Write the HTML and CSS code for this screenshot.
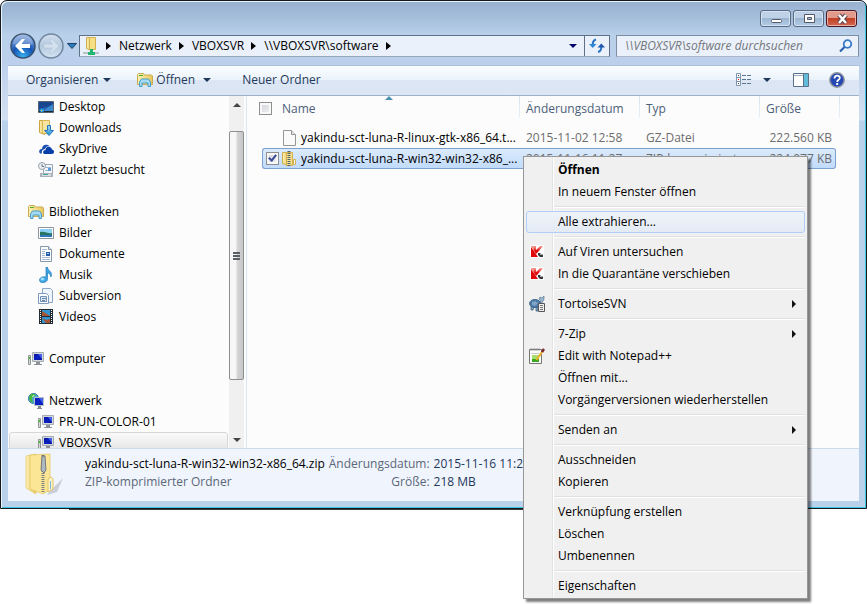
FILE: index.html
```html
<!DOCTYPE html>
<html lang="de">
<head>
<meta charset="utf-8">
<title>software</title>
<link rel="stylesheet" href="styles.css">
</head>
<body>
<svg class="defs" aria-hidden="true">
  <defs>
    <linearGradient id="gold" x1="0" x2="1"><stop offset="0" stop-color="#fdf0b4"/><stop offset="1" stop-color="#e9c65c"/></linearGradient>
    <linearGradient id="blue" x1="0" y1="0" x2="0" y2="1"><stop offset="0" stop-color="#9fd8f5"/><stop offset="1" stop-color="#2a8fd0"/></linearGradient>
    <linearGradient id="screen" x1="0" y1="0" x2="1" y2="1"><stop offset="0" stop-color="#0a1490"/><stop offset=".5" stop-color="#0a20c8"/><stop offset="1" stop-color="#0a1490"/></linearGradient>
    <radialGradient id="orb" cx=".5" cy=".95" r=".9"><stop offset="0" stop-color="#37b4f2"/><stop offset=".5" stop-color="#1553b4"/><stop offset="1" stop-color="#7fa3dc"/></radialGradient>
    <linearGradient id="pale" x1="0" y1="0" x2="0" y2="1"><stop offset="0" stop-color="#d3e0ee"/><stop offset=".5" stop-color="#b5c9df"/><stop offset="1" stop-color="#d5e4f3"/></linearGradient>
    <linearGradient id="red" x1="0" y1="0" x2="0" y2="1"><stop offset="0" stop-color="#f6a79d"/><stop offset=".6" stop-color="#e00b0b"/><stop offset="1" stop-color="#d80000"/></linearGradient>
    <symbol id="pc" viewBox="0 0 16 16"><path d="M.5 4.500h2v9h-2z" fill="#d6dad6" stroke="#8e9691"/><path d="M1 6h1v2H1z" fill="#34c41c"/><path d="M4.500 1.500h11v9h-11z" fill="#d3d8dc" stroke="#a4abb2"/><path d="M6 3h8v6H6z" fill="url(#screen)"/><path d="M10 3h4v5z" fill="#5d7bff" opacity=".7"/><path d="M8 11h4v2H8zM6 13h8v1H6z" fill="#8c9298"/></symbol>
    <symbol id="library" viewBox="0 0 16 16"><path d="M.5 2.500l1-1h5l1 1.500h7l1 1v8.500H.5z" fill="url(#gold)" stroke="#c9ab52"/><path d="M2 3h4v1H2z" fill="#4fae35"/><path d="M2.500 14.500V10l2-3h7l2 3v4.500H11V11H5v3.500z" fill="#a6dbf4" stroke="#459fca"/></symbol>
    <symbol id="desktop" viewBox="0 0 16 16"><path d="M.5 2.500h15v11H.5z" fill="#2562b4" stroke="#5a6470"/><path d="M1 3h14v3L1 10z" fill="#17458f"/><path d="M5 12l10-7v7z" fill="#4ba1dc" opacity=".6"/><path d="M1 12h14v1H1z" fill="#1a2a3c"/><circle cx="4" cy="11.500" r="2" fill="#2f9de0"/><path d="M3 11h1v1H3z" fill="#fc3"/></symbol>
    <symbol id="download" viewBox="0 0 16 16"><path d="M1.500.5h5v14l-5-2z" fill="url(#gold)" stroke="#cba53c"/><path d="M4.500.5h7v13h-7z" fill="#f8e5a0" stroke="#d7b654"/><path d="M9.500 5.500h3v5h3l-4.500 5-4.500-5h3z" fill="url(#blue)" stroke="#2475bd"/></symbol>
    <symbol id="cloud" viewBox="0 0 16 16"><path d="M2 12.500C0 9.500 2 8 4 8c0-5 5.500-5.500 8-2.500-2.500-1-4.500.500-5 2.500-3 .5-3.500 2.500-3 4.500z" fill="#1a4fae"/><path d="M6.500 13C4.500 12.500 4.500 9.500 7.500 9c0-4 5.500-4.500 6.500-.5 3 .5 2.500 4.500 0 4.500z" fill="#063fa8"/></symbol>
    <symbol id="recent" viewBox="0 0 16 16"><path d="M5.500 2.500h9v9h-9z" fill="#f5f7fa" stroke="#9ba6b2"/><path d="M7 5h6v1H7zM7 8h3v1H7z" fill="#9bb7d5"/><path d="M10 6h3v3h-3z" fill="#5c9bd6"/><path d="M2 11h13v4H2z" fill="#aab1b8"/><path d="M4 12h9v2H4z" fill="#d6dce0"/><path d="M5 12h5v1H5z" fill="#4aa4a0"/><circle cx="4" cy="4" r="3.500" fill="#eef2f6" stroke="#97a0a9"/><path d="M4 2v2.500h2" fill="none" stroke="#687785"/></symbol>
    <symbol id="picture" viewBox="0 0 16 16"><path d="M.5 2.500h15v11H.5z" fill="#fff" stroke="#8e959c"/><path d="M2 4h12v8H2z" fill="#8fd0f5"/><path d="M2 7c5-1 8 2 12 1v4H2z" fill="#28755f"/><path d="M2 10h12v2H2z" fill="#3076bb"/></symbol>
    <symbol id="document" viewBox="0 0 16 16"><path d="M2.500.5h8l3 3v12h-11z" fill="#fff" stroke="#8798aa"/><path d="M10.500.5v3h3" fill="#dbe5ef" stroke="#8798aa"/><path d="M4 3.500h5M4 5.500h3M4 7.500h3M4 9.500h3M4 11.500h8M4 13.500h8" stroke="#a3bad2"/><path d="M8 6h4v4H8z" fill="#215ea7"/><path d="M9 7h2v1H9z" fill="#a6d6f5"/></symbol>
    <symbol id="music" viewBox="0 0 16 16"><path d="M8 0h1.500c0 4 5.500 4 3.500 10-.5-3-2-4-3.500-4v6c0 4-7.500 5-8 1.500C1.500 10 5 9.500 8 10z" fill="#3da4e4" stroke="#227dbe" stroke-width=".7"/><ellipse cx="4.500" cy="12" rx="2" ry="1.500" fill="#9fdcff"/></symbol>
    <symbol id="subversion" viewBox="0 0 16 16"><path d="M4.500.5h8l2 2v12h-10z" fill="#eff5fb" stroke="#8ba7c5"/><path d="M.5 5.500h8l2 2v8H.5z" fill="#fafcff" stroke="#7d99bb"/><path d="M2.500 8.500h6v5h-6z" fill="#dce8f4" stroke="#7390b5"/><path d="M4 10.500h4M4 12.500h3" stroke="#6a87ad"/></symbol>
    <symbol id="video" viewBox="0 0 16 16"><path d="M1 0h14v15H1z" fill="#222d35"/><path d="M4 1h8v6H4zM4 8h8v6H4z" fill="#3195d2"/><path d="M4 2l5 3 3 2H4zM4 9l4 2 4-1v4H8z" fill="#a65632"/><path d="M2.500 1v14M13.500 1v14" stroke="#fff" stroke-dasharray="1 1"/></symbol>
    <symbol id="network" viewBox="0 0 16 16"><circle cx="5.500" cy="5.500" r="5" fill="#4ba7e0" stroke="#287ba9"/><path d="M1 4c2-5 6-3 7-2L6 4 4 5l1 5C2 9 1 7 1 4z" fill="#49b63e"/><path d="M4 3l3-1-2 2z" fill="#fff"/><path d="M6.500 4.500h9v8h-9z" fill="#0a20c0" stroke="#b5bfc8"/><path d="M11 5h4v6z" fill="#5d7bff" opacity=".7"/><path d="M10 13h3v2h-3zM9 15h5v1H9z" fill="#858b91"/></symbol>
    <symbol id="zip" viewBox="0 0 16 16"><path d="M1.500 1.500h6v13l-6-2z" fill="url(#gold)" stroke="#cfae49"/><path d="M5.500 1.500h6v13h-6z" fill="#f8e28b" stroke="#d4b04c"/><path d="M8 0v16" stroke="#53636e" stroke-width="3" stroke-dasharray="1 1"/><path d="M12.500 8.500h2v5h-2z" fill="#fff" stroke="#d4b04c"/></symbol>
    <symbol id="file" viewBox="0 0 16 16"><path d="M2.500.5h8l4 4v11h-12z" fill="#fafafa" stroke="#969696"/><path d="M10.500.5v4h4" fill="#e4e4e4" stroke="#969696"/></symbol>
    <symbol id="kaspersky" viewBox="0 0 16 16"><path d="M1 1h14v13H1z" fill="#fff"/><path d="M2 2h5v4l4-4h3L9 8l-2 2z" fill="url(#red)"/><path d="M2 3l7 10H2z" fill="#e10808"/><path d="M2 2h3v4z" fill="#f3968c"/><path d="M9 9h2l1 1h2v3h-3l-2-2z" fill="#33373a"/><path d="M11 10h3v1h-3z" fill="#aaa"/></symbol>
    <symbol id="tortoise" viewBox="0 0 16 16"><path d="M10 8c1-1 1-3 1-4l-1-1 1-2 2 1 2-2v3l-1 2-2 4z" fill="#9ab6cd" stroke="#4a6d90" stroke-width=".6"/><path d="M2 10v4h2l1-3M7 11v4h2v-4" fill="#82aac9" stroke="#305779" stroke-width=".7"/><ellipse cx="6" cy="7.500" rx="5.500" ry="4" fill="#4b7aa6" stroke="#2f5580" stroke-width=".8"/><path d="M3 6l3-1 3 2-3 3-3-1z" fill="#7ea3c6"/><path d="M9.500 7.500h6v8h-6z" fill="#eee" stroke="#555"/><path d="M11 9.500h3M11 11.500h3M11 13.500h3" stroke="#777"/></symbol>
    <symbol id="notepad" viewBox="0 0 16 16"><path d="M.5 1.500h12v14H.5z" fill="#fbfdf8" stroke="#777"/><path d="M3 7h7v7H3z" fill="#a9dd70"/><path d="M3 11h7v3H3z" fill="#3aa523"/><path d="M2 5.500h8" stroke="#ccc"/><path d="M2 0v3M4 0v3M6 0v3M8 0v3M10 0v3" stroke="#888" stroke-width=".7"/><path d="M7.500 12L13 4" stroke="#edae25" stroke-width="2"/><path d="M13 4l2-3" stroke="#782424" stroke-width="2.500"/></symbol>
  </defs>
</svg>

<main class="window">
  <header class="titlebar">
    <button class="caption" aria-label="Minimieren"><svg width="28" height="16" viewBox="0 0 28 16"><rect x="9.500" y="8.500" width="10" height="3" rx="1" fill="#fff" stroke="#555966"/></svg></button>
    <button class="caption" aria-label="Maximieren"><svg width="28" height="16" viewBox="0 0 28 16"><path d="M9.500 3.500h10v8h-10z" fill="#fff" stroke="#555966"/><path d="M12.500 6.500h4v2h-4z" fill="#a7c2dc" stroke="#555966"/></svg></button>
    <button class="caption close" aria-label="Schließen"><svg width="28" height="16" viewBox="0 0 28 16"><path d="M11 4l7 8M18 4l-7 8" stroke="#5a4450" stroke-width="4.500"/><path d="M11 4l7 8M18 4l-7 8" stroke="#fff" stroke-width="2.500"/></svg></button>
  </header>

  <div class="navrow">
    <div class="travel">
      <button class="plain" aria-label="Zurück"><svg width="26" height="26" viewBox="0 0 26 26"><circle cx="13" cy="13" r="12" fill="url(#orb)" stroke="#38506f" stroke-width="1.500"/><path d="M3 11a10 10 0 0 1 20 0q-10 4-20 0z" fill="#fff" opacity=".25"/><path d="M5 13l7-7h3l-3.500 5H20v4h-8.500L15 20h-3z" fill="#fff"/></svg></button>
      <button class="plain" aria-label="Vorwärts"><svg width="26" height="26" viewBox="0 0 26 26"><circle cx="13" cy="13" r="12" fill="url(#pale)" stroke="#71869e" stroke-width="1.500"/><path d="M21 13l-7-7h-3l3.500 5H6v4h8.500L11 20h3z" fill="#d3e0ed" stroke="#b4c6d8" stroke-width=".6"/></svg></button>
      <button class="plain history" aria-label="Verlauf"><svg width="10" height="6" viewBox="0 0 10 6"><path d="M.5.5h9L5 5.500z" fill="#2d7db8" stroke="#173f70"/></svg></button>
    </div>
    <nav class="address" aria-label="Adresse">
      <svg class="place" width="16" height="18" viewBox="0 0 16 18"><path d="M3.500.5h5v13l-5-2z" fill="url(#gold)" stroke="#cfae49"/><path d="M6.500.5h6v12h-6z" fill="#f7df85" stroke="#d4b04c"/><path d="M0 15h16v2H0z" fill="#b8c4c8"/><path d="M7 12h3v3h2v3H5v-3h2z" fill="#21b571"/></svg>
      <i class="crumb-arrow"></i><a href="#">Netzwerk</a>
      <i class="crumb-arrow"></i><a href="#">VBOXSVR</a>
      <i class="crumb-arrow"></i><a href="#">\\VBOXSVR\software</a>
      <i class="crumb-arrow"></i>
      <button class="plain recent" aria-label="Vorherige Orte"><i class="down"></i></button>
      <button class="plain refresh" aria-label="Aktualisieren"><svg width="16" height="16" viewBox="0 0 16 16"><path d="M7 1.500C4.500 2 3.700 4 3.700 7M9 14c2.500-.5 3.300-2 3.300-5" fill="none" stroke="#2c72c4" stroke-width="2"/><path d="M0 6h7.500L3.700 10z" fill="#2c88d6"/><path d="M8.500 9.500h7.500L12.300 5.500z" fill="#1d57ac"/></svg></button>
    </nav>
    <form class="search">
      <input type="search" aria-label="Suchen" placeholder="\\VBOXSVR\software durchsuchen">
      <button class="plain" type="button" aria-label="Suche starten"><svg width="14" height="14" viewBox="0 0 14 14"><circle cx="8.500" cy="5" r="3.800" fill="#eaf5ff" stroke="#3a78c6" stroke-width="1.800"/><path d="M5.500 8L1 12.500" stroke="#2860ab" stroke-width="2.200"/></svg></button>
    </form>
  </div>

  <div class="toolbar">
    <button class="tool organise">Organisieren <i class="down"></i></button>
    <button class="tool open"><svg width="16" height="16"><use href="#library"/></svg>Öffnen <i class="down"></i></button>
    <button class="tool">Neuer Ordner</button>
    <span class="tools-end">
      <button class="tool" aria-label="Ansicht ändern"><svg width="16" height="14" viewBox="0 0 16 14"><path d="M.5.5h4v4h-4zM.5 4.500h4v4h-4zM.5 8.500h4v4h-4z" fill="#fff" stroke="#7e93ad"/><path d="M2 2h1v1H2zM2 10h1v1H2z" fill="#444"/><path d="M2 6h1v1H2z" fill="red"/><path d="M6 2.500h4M11 2.500h4M6 6.500h4M11 6.500h4M6 10.500h4M11 10.500h4" stroke="#5b7492"/></svg><i class="down"></i></button>
      <button class="tool" aria-label="Vorschaufenster"><svg width="16" height="14" viewBox="0 0 16 14"><path d="M.5.5h15v13H.5z" fill="#fff" stroke="#56718c"/><path d="M1 2.500h9" stroke="#9cb0c4"/><path d="M10.500 1v12" stroke="#56718c"/><path d="M11 1h4v12h-4z" fill="#62bbd9"/></svg></button>
      <button class="tool" aria-label="Hilfe"><svg width="16" height="16" viewBox="0 0 16 16"><circle cx="8" cy="8" r="7.200" fill="#2348b4" stroke="#8f959e" stroke-width="1.500"/><path d="M5.500 6.500c0-4 5.500-3.500 5.300-.5C10.700 8 8.200 7.500 8.200 10" fill="none" stroke="#fff" stroke-width="1.800"/><path d="M7.200 11h2v2h-2z" fill="#fff"/></svg></button>
    </span>
  </div>

  <div class="body">
    <nav class="sidebar" aria-label="Navigation">
      <ul class="tree">
        <li class="child"><svg><use href="#desktop"/></svg><a href="#">Desktop</a></li>
        <li class="child"><svg><use href="#download"/></svg><a href="#">Downloads</a></li>
        <li class="child"><svg><use href="#cloud"/></svg><a href="#">SkyDrive</a></li>
        <li class="child"><svg><use href="#recent"/></svg><a href="#">Zuletzt besucht</a></li>
      </ul>
      <ul class="tree">
        <li><svg><use href="#library"/></svg><a href="#">Bibliotheken</a></li>
        <li class="child"><svg><use href="#picture"/></svg><a href="#">Bilder</a></li>
        <li class="child"><svg><use href="#document"/></svg><a href="#">Dokumente</a></li>
        <li class="child"><svg><use href="#music"/></svg><a href="#">Musik</a></li>
        <li class="child"><svg><use href="#subversion"/></svg><a href="#">Subversion</a></li>
        <li class="child"><svg><use href="#video"/></svg><a href="#">Videos</a></li>
      </ul>
      <ul class="tree">
        <li><svg><use href="#pc"/></svg><a href="#">Computer</a></li>
      </ul>
      <ul class="tree">
        <li><svg><use href="#network"/></svg><a href="#">Netzwerk</a></li>
        <li class="child"><svg><use href="#pc"/></svg><a href="#">PR-UN-COLOR-01</a></li>
        <li class="child current"><svg><use href="#pc"/></svg><a href="#">VBOXSVR</a></li>
      </ul>
    </nav>
    <div class="scrollbar">
      <button class="plain step" aria-label="Nach oben"><i class="up"></i></button>
      <div class="before"></div>
      <div class="thumb"><i></i><i></i><i></i></div>
      <div class="after"></div>
      <button class="plain step" aria-label="Nach unten"><i class="down"></i></button>
    </div>
    <section class="files">
      <table>
        <colgroup><col class="c-check"><col><col class="c-date"><col class="c-date"><col class="c-size"></colgroup>
        <thead>
          <tr>
            <th><input type="checkbox" aria-label="Alle auswählen"></th>
            <th class="sorted">Name</th><th>Änderungsdatum</th><th>Typ</th><th>Größe</th>
          </tr>
        </thead>
        <tbody>
          <tr class="spacer"><td colspan="5"></td></tr>
          <tr>
            <td></td>
            <td class="name"><span><svg><use href="#file"/></svg>yakindu-sct-luna-R-linux-gtk-x86_64.t...</span></td>
            <td>2015-11-02 12:58</td><td>GZ-Datei</td><td class="size">222.560 KB</td>
          </tr>
          <tr class="selected">
            <td><input type="checkbox" aria-label="Auswählen" checked></td>
            <td class="name"><span><svg><use href="#zip"/></svg>yakindu-sct-luna-R-win32-win32-x86_...</span></td>
            <td>2015-11-16 11:27</td><td>ZIP-komprimierte...</td><td class="size">224.077 KB</td>
          </tr>
        </tbody>
      </table>
    </section>
  </div>

  <footer class="details">
    <svg class="preview" width="40" height="42" viewBox="0 0 40 42"><path d="M25 38l13-13-6 14-10 3z" fill="#8d99a8" opacity=".4"/><path d="M1 3l10-2v40L1 35z" fill="url(#gold)" stroke="#e6c964" stroke-width=".7"/><path d="M5 2l20-1v36L18 41 5 36z" fill="#fbe695" stroke="#e3c462" stroke-width=".7"/><path d="M18 2v38" stroke="#7c7f7c" stroke-width="3" stroke-dasharray="1 1"/><path d="M17 3h3l1 14-2 3-3-3z" fill="#aeb9c2" stroke="#5d666f" stroke-width=".8"/><path d="M23 26l3-2 2 2v10l-5 3z" fill="#fdf3c8" stroke="#e3c462"/><path d="M25 28h1v8h-1z" fill="#7fb4dc"/></svg>
    <div class="facts">
      <span class="dark">yakindu-sct-luna-R-win32-win32-x86_64.zip</span><span class="label">Änderungsdatum:</span><span class="value">2015-11-16 11:27</span>
      <span class="label kind">ZIP-komprimierter Ordner</span><span class="label">Größe:</span><span class="value">218 MB</span>
    </div>
  </footer>
</main>
<div class="edge"></div>

<div class="menu" role="menu">
  <button role="menuitem"><span class="slot"></span><b>Öffnen</b></button>
  <button role="menuitem"><span class="slot"></span>In neuem Fenster öffnen</button>
  <hr>
  <button role="menuitem" class="hot"><span class="slot"></span>Alle extrahieren...</button>
  <hr>
  <button role="menuitem"><span class="slot"><svg><use href="#kaspersky"/></svg></span>Auf Viren untersuchen</button>
  <button role="menuitem"><span class="slot"><svg><use href="#kaspersky"/></svg></span>In die Quarantäne verschieben</button>
  <hr>
  <button role="menuitem" class="sub"><span class="slot"><svg><use href="#tortoise"/></svg></span>TortoiseSVN</button>
  <hr>
  <button role="menuitem" class="sub"><span class="slot"></span>7-Zip</button>
  <button role="menuitem"><span class="slot"><svg><use href="#notepad"/></svg></span>Edit with Notepad++</button>
  <button role="menuitem"><span class="slot"></span>Öffnen mit...</button>
  <button role="menuitem"><span class="slot"></span>Vorgängerversionen wiederherstellen</button>
  <hr>
  <button role="menuitem" class="sub"><span class="slot"></span>Senden an</button>
  <hr>
  <button role="menuitem"><span class="slot"></span>Ausschneiden</button>
  <button role="menuitem"><span class="slot"></span>Kopieren</button>
  <hr>
  <button role="menuitem"><span class="slot"></span>Verknüpfung erstellen</button>
  <button role="menuitem"><span class="slot"></span>Löschen</button>
  <button role="menuitem"><span class="slot"></span>Umbenennen</button>
  <hr>
  <button role="menuitem"><span class="slot"></span>Eigenschaften</button>
</div>
</body>
</html>
```
FILE: styles.css
```css
* { box-sizing: border-box; }
body {
  margin: 0;
  height: 100vh;
  display: flex;
  flex-direction: column;
  padding-bottom: 94px;
  overflow: hidden;
  position: relative;
  background: #fff;
  font: 12px/16px "Open Sans", "Noto Sans", sans-serif;
  color: #000;
}
button, input { font: inherit; color: inherit; }
a { color: inherit; text-decoration: none; }
svg { flex: none; display: block; }
.defs { position: absolute; width: 0; height: 0; }
.plain {
  border: 0;
  padding: 0;
  background: none;
  display: flex;
  align-items: center;
  justify-content: center;
}

.window {
  flex: 1;
  min-height: 0;
  display: flex;
  flex-direction: column;
  border: 1px solid #14181f;
  border-radius: 7px 7px 0 0;
  box-shadow: inset 1px 1px #e9f3fc, inset -1px -1px #3bc5e0;
  padding: 0 7px 7px;
  background: linear-gradient(#98b1cf 0, #a3bcd9 15px, #b9d0ea 34px, #bcd0ec 62px, #d3e0f1 119px, #b9d1ea 120px);
}
.titlebar {
  display: flex;
  justify-content: flex-end;
  gap: 2px;
  height: 32px;
  padding: 9px 2px 0 0;
}
.caption {
  width: 31px;
  height: 17px;
  padding: 0;
  display: flex;
  align-items: center;
  justify-content: center;
  border: 1px solid #596a82;
  border-radius: 3px;
  box-shadow: inset 0 0 0 1px #d5e4f2;
  background: linear-gradient(#bed1e6 50%, #9cb6d2 50%, #b3cce5);
}
.close {
  border-color: #4a1720;
  box-shadow: inset 0 0 0 1px #eab2a8;
  background: linear-gradient(#e29a8c 50%, #c23f24 50%, #cf6a52);
}

.navrow { display: flex; align-items: center; height: 25px; margin-bottom: 7px; }
.travel {
  display: flex;
  align-items: center;
  gap: 2px;
  padding-left: 2px;
  width: 71px;
}
.history { margin-left: 1px; }
.address {
  flex: 1;
  display: flex;
  align-items: center;
  height: 22px;
  border: 1px solid #5f7186;
  border-bottom-color: #9aa9ba;
  background: #eaf1fa;
}
.place { margin: 0 7px 0 3px; }
.crumb-arrow {
  border: 4px solid transparent;
  border-left: 5px solid #000;
  border-right: 0;
}
.address a { margin: 0 7px 0 8px; }
.down { border: 4px solid transparent; border-top: 4px solid #1e395b; border-bottom: 0; }
.up { border: 4px solid transparent; border-bottom: 4px solid #444; border-top: 0; }
.recent { margin-left: auto; width: 22px; height: 20px; }
.recent .down { border-top-color: #00006a; }
.refresh { width: 25px; height: 20px; border-left: 1px solid #5f7186; }
.search {
  display: flex;
  width: 243px;
  height: 22px;
  margin: 0 0 0 6px;
  padding-right: 5px;
  border: 1px solid #7d8ea2;
  border-bottom-color: #aab8c9;
  background: #eaf1fa;
}
.search input {
  flex: 1;
  min-width: 0;
  border: 0;
  outline: 0;
  padding: 0 8px;
  background: none;
  font-style: italic;
}
.search input::placeholder { color: #74767c; opacity: 1; }

.toolbar {
  display: flex;
  align-items: center;
  height: 31px;
  padding: 0 16px 1px 18px;
  border-top: 1px solid #a6c0dc;
  border-bottom: 1px solid #a0b2c9;
  background: linear-gradient(#fbfdff, #e9f2fa 50%, #dbe5f4 50%, #dce7f5);
  color: #1e395b;
}
.tool {
  display: flex;
  align-items: center;
  gap: 5px;
  padding: 0;
  border: 0;
  background: none;
}
.tool svg { margin-right: -2px; }
.organise { margin-right: 26px; }
.open { margin-right: 31px; }
.open .down { margin-left: 3px; }
.tools-end { display: flex; align-items: center; gap: 22px; margin-left: auto; }
.tools-end .down { margin-left: 8px; }

.body { flex: 1; min-height: 0; display: flex; background: #fcfcfc; }
.sidebar { width: 221px; overflow: hidden; }
.tree { list-style: none; margin: 0 0 21px; padding: 0; }
.tree li {
  display: flex;
  align-items: center;
  gap: 5px;
  height: 21px;
  padding-left: 20px;
}
.tree .child { padding-left: 30px; }
.tree svg, .name svg, .slot svg { width: 16px; height: 16px; }
.tree .current {
  margin: 0 1px;
  padding-left: 28px;
  border: 1px solid #d6d6d6;
  border-radius: 3px;
  background: linear-gradient(#fafafa, #e3e3e3);
}
.scrollbar {
  width: 15px;
  display: flex;
  flex-direction: column;
  background: #f0f0f0;
}
.step { height: 17px; }
.step .down { border-top-color: #444; }
.before { flex: 18; }
.thumb {
  flex: 249;
  display: flex;
  flex-direction: column;
  align-items: center;
  justify-content: center;
  gap: 1px;
  border: 1px solid #8e8f8f;
  border-radius: 2px;
  background: linear-gradient(90deg, #f7f7f7 45%, #d6d6d8 55%, #c5c6ca);
}
.thumb i { width: 7px; height: 2px; background: #5d6064; }
.after { flex: 51; }

.files {
  flex: 1;
  min-width: 0;
  margin-left: 2px;
  padding: 0 23px 0 15px;
  border-left: 1px solid #d8e5f3;
}
table { width: 100%; table-layout: fixed; border-collapse: separate; border-spacing: 0; }
.c-check { width: 19px; }
.c-date { width: 120px; }
.c-size { width: 76px; }
th, td { padding: 0 0 0 6px; text-align: left; white-space: nowrap; font-weight: 400; }
th { height: 25px; color: #4c607a; position: relative; }
th::after {
  content: "";
  position: absolute;
  inset: 0 0 3px auto;
  width: 1px;
  background: linear-gradient(#d5e3f1, #e9f0f7);
}
th:first-child::after { display: none; }
th:last-child::after { right: -4px; }
th:first-child { padding: 0; }
th:first-child input { margin-left: -3px; }
th.sorted { padding-left: 1px; }
.sorted::before {
  content: "";
  position: absolute;
  top: 0;
  left: 104px;
  border: 4px solid transparent;
  border-top: 0;
  border-bottom-color: #4b90b4;
}
td { height: 21px; color: #6d6d6d; border: 1px solid transparent; border-width: 1px 0; }
td:first-child { padding-left: 3px; border-left-width: 1px; }
td:last-child { border-right-width: 1px; }
.spacer td { height: 6px; border: 0; }
td.name { padding-left: 0; color: #000; }
.name span { display: flex; align-items: center; gap: 4px; height: 18px; }
td.size { padding: 0 3px 0 0; text-align: right; }
.selected td { border-color: #7da2ce; background: linear-gradient(#dcebfc, #c1dbfc); }
.selected td:first-child { border-radius: 3px 0 0 3px; }
.selected td:last-child { border-radius: 0 3px 3px 0; }
input[type="checkbox"] {
  appearance: none;
  display: block;
  position: relative;
  width: 13px;
  height: 13px;
  margin: 0;
  border: 1px solid #8e8f8f;
  box-shadow: inset 0 0 0 2px #f8f8f8;
  background: linear-gradient(135deg, #cfd3d9, #f3f3f3);
}
input[type="checkbox"]:checked::after {
  content: "";
  position: absolute;
  left: 3px;
  top: 0;
  width: 3px;
  height: 6px;
  border: solid #3a4a94;
  border-width: 0 2px 2px 0;
  transform: rotate(40deg);
}

.details {
  display: flex;
  align-items: flex-start;
  height: 53px;
  padding: 4px 0 0 17px;
  gap: 20px;
  border-top: 1px solid #cbdbea;
  background: #f0f4fc;
  color: #1e395b;
}
.facts { display: grid; grid-template-columns: auto auto 1fr; column-gap: 4px; row-gap: 2px; padding-top: 3px; white-space: nowrap; }
.dark { color: #000; }
.label { color: #5a6779; text-align: right; }
.kind { text-align: left; }
.edge { height: 1px; margin: 0 20% 0 69px; background: #3c3c3c; }

.menu {
  position: absolute;
  left: 523px;
  top: 156px;
  width: 285px;
  padding: 2px 2px 1px;
  border: 1px solid #979797;
  background: linear-gradient(90deg, transparent 28px, #e2e3e3 28px, #e2e3e3 29px, #fff 29px, #fff 30px, transparent 30px) #f0f0f0;
  box-shadow: 3px 3px 2px #00000080;
}
.menu button {
  display: flex;
  align-items: center;
  width: 100%;
  height: 22px;
  padding: 0;
  border: 1px solid transparent;
  border-radius: 3px;
  background: none;
  text-align: left;
  white-space: nowrap;
}
.slot { width: 31px; padding-left: 2px; flex: none; }
.menu .hot { border-color: #aecff7; background: linear-gradient(#eff3f9, #e5ebf5); }
.menu hr {
  height: 2px;
  margin: 3px 0 3px 28px;
  border: 0;
  border-top: 1px solid #e0e0e0;
  background: #fff;
}
.sub::after {
  content: "";
  margin: 0 8px 0 auto;
  border: 4px solid transparent;
  border-left: 4px solid #111;
  border-right: 0;
}
```
